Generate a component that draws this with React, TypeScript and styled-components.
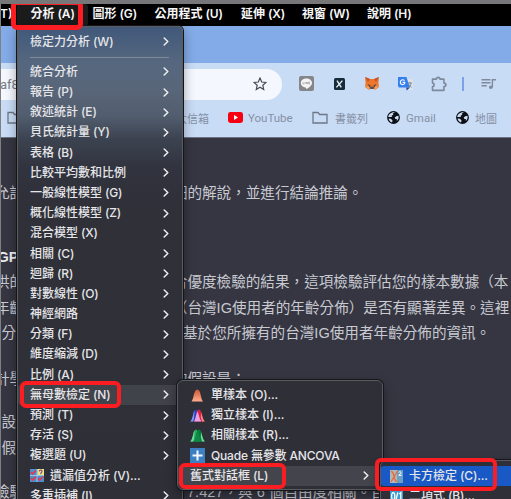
import React from "react";
import styled, { createGlobalStyle, css } from "styled-components";

const GlobalStyle = createGlobalStyle`
  html, body, #root { margin: 0; padding: 0; width: 100%; height: 100%; }
  body { overflow: hidden; background: #353641; }
  * { box-sizing: border-box; }
  svg { display: block; flex: none; }
`;

const sans = `Inter, "Noto Sans CJK TC", sans-serif`;

const Screen = styled.div`
  position: relative;
  width: 511px;
  height: 499px;
  overflow: hidden;
  display: flex;
  flex-direction: column;
  border-top: 4px solid #777779;
  background: #353641;
  font-family: ${sans};
  white-space: nowrap;
`;

const MenuBar = styled.nav`
  flex: none;
  height: 22px;
  display: flex;
  background: #000;
  color: #f7f7f7;
  font-size: 12px;
  font-weight: 600;
  line-height: 20px;
`;

const BarItem = styled.div<{ $w: number; $open?: boolean }>`
  flex: none;
  width: ${(p) => p.$w}px;
  height: 22px;
  padding-left: ${(p) => (p.$w < 20 ? 0 : 14)}px;
  margin-right: ${(p) => (p.$open ? -9 : 0)}px;
  border-radius: 3px;
  background: ${(p) => (p.$open ? "#1b1b1c" : "transparent")};
`;

const Key = styled.span`
  font-family: Inter, sans-serif;
  margin-left: 3px;
  letter-spacing: -0.15px;
`;

const TabStrip = styled.div`
  flex: none;
  height: 37px;
  background: #83abe7;
`;

const Browser = styled.header`
  flex: none;
  height: 75px;
  background: #c9dcf6;
  border-bottom: 1px solid #6c7382;
`;

const Toolbar = styled.div`
  height: 41px;
  display: flex;
  align-items: center;
`;

const Address = styled.div`
  flex: none;
  width: 282px;
  height: 31px;
  display: flex;
  align-items: center;
  justify-content: space-between;
  padding-right: 15px;
  margin-top: 1px;
  border-radius: 0 16px 16px 0;
  background: #f4f8fe;
  color: #777c84;
  font: 13px Roboto, sans-serif;
`;

const Slot = styled.div<{ $gap: number }>`
  flex: none;
  display: flex;
  align-items: center;
  margin-left: ${(p) => p.$gap}px;
`;

const Divider = styled.div`
  width: 2px;
  height: 14px;
  background: #78a3e6;
`;

const Bookmarks = styled.div`
  height: 27px;
  display: flex;
  align-items: center;
  color: #8490a4;
  font: 11px Roboto, "Noto Sans CJK TC", sans-serif;
`;

const BookmarkText = styled.span<{ $w: number; $spread?: number; $size?: number }>`
  flex: none;
  width: ${(p) => p.$w}px;
  font-size: ${(p) => p.$size ?? 11}px;
  letter-spacing: ${(p) => p.$spread ?? 0}px;
`;

const Article = styled.main`
  flex: 1;
  padding-top: 43px;
  color: #c8c9d1;
  font-family: "Liberation Sans", "Noto Sans CJK TC", sans-serif;
  font-size: 14.6px;
`;

const Line = styled.div<{ $gap?: number; $strong?: boolean }>`
  display: flex;
  height: 25.5px;
  line-height: 25.5px;
  margin-top: ${(p) => p.$gap ?? 0}px;
  ${(p) =>
    p.$strong &&
    css`
      font-weight: 700;
      color: #ededf0;
    `}
`;

const Lead = styled.span<{ $shift: number; $until: number }>`
  flex: none;
  width: ${(p) => p.$until - p.$shift}px;
  margin-left: ${(p) => p.$shift}px;
`;

const Panel = styled.div`
  position: absolute;
  color: #e6e6e9;
  font-size: 12px;
  font-weight: 500;
  background: #2e2f37;
  border: 1px solid #5a5b61;
  box-shadow: 0 0 0 1px #15161a, 0 4px 12px rgba(0, 0, 0, 0.4);
`;

const AnalyzeMenu = styled(Panel)`
  left: 17px;
  top: 22px;
  width: 166px;
  height: 500px;
  padding-top: 4.6px;
  border-radius: 0 5px 0 0;
  background: linear-gradient(180deg, #40587a 0, #55677f 34px, #596679 62px, #525e6f 88px, #3c4350 112px, #31333e 142px, #2f3038 180px, #2e2f37 100%);
`;

const MethodsMenu = styled(Panel)`
  left: 177px;
  top: 376px;
  width: 206px;
  height: 110px;
  padding-top: 4px;
  border-radius: 6px;
`;

const LegacyMenu = styled(Panel)`
  left: 380px;
  top: 456px;
  width: 150px;
  height: 60px;
  padding-top: 5px;
  border-radius: 6px;
`;

const Row = styled.div<{ $tone?: string; $left?: number; $tight?: boolean }>`
  display: flex;
  align-items: center;
  height: 20.2px;
  padding-left: ${(p) => p.$left ?? 12}px;
  padding-right: 13px;
  background: ${(p) => p.$tone ?? "transparent"};
  border-radius: 3px;
  line-height: 20px;
  letter-spacing: ${(p) => (p.$tight ? "-0.17px" : "normal")};

  > svg:last-child { margin-left: auto; }
`;

const RowIcon = styled.span`
  flex: none;
  margin-right: 6px;
`;

const Rule = styled.div`
  height: 1px;
  margin: 4.8px 13px 4.2px 12px;
  background: #7f8997;
`;

const Highlight = styled.div<{ $x: number; $y: number; $w: number; $h: number; $stroke?: number }>`
  position: absolute;
  left: ${(p) => p.$x}px;
  top: ${(p) => p.$y - 4}px;
  width: ${(p) => p.$w}px;
  height: ${(p) => p.$h}px;
  border: ${(p) => p.$stroke ?? 4}px solid #fc1d22;
  border-radius: 6px;
`;

const Edge = styled.div`
  position: absolute;
  left: 0;
  top: 0;
  width: 1px;
  height: 495px;
  background: #808083;
`;

const Chevron = () => (
  <svg width="6" height="9" viewBox="0 0 6 9" fill="none" stroke="#eeeeef" strokeWidth="1.5" strokeLinecap="round" strokeLinejoin="round">
    <path d="M1.2 1 4.8 4.5 1.2 8" />
  </svg>
);

const Folder = () => (
  <svg width="16" height="13" viewBox="0 0 16 13" fill="none" stroke="#6d7786" strokeWidth="1.3">
    <path d="M1 1.5h5l1.6 2H15V12H1z" />
  </svg>
);

const Star = () => (
  <svg width="14" height="14" viewBox="0 0 14 14" fill="none" stroke="#484c53" strokeWidth="1.2" strokeLinejoin="miter">
    <path d="m7 1 1.7 4 4.3.4-3.2 2.8.9 4.3L7 10.3l-3.7 2.2.9-4.3L1 5.4 5.3 5z" />
  </svg>
);

const LineLogo = () => (
  <svg width="15" height="15" viewBox="0 0 15 15">
    <rect width="15" height="15" rx="2" fill="#85868a" />
    <path d="M7.4 2.4c3.2 0 5.6 2 5.6 4.5 0 2.7-3.7 5-5.8 6.3.2-1 .1-1.6-.8-1.8-2.7-.5-4.6-2.3-4.6-4.5 0-2.5 2.4-4.5 5.6-4.5z" fill="#f4f4f5" />
    <path d="M4 6v2h1.2M6 6v2M7.2 8V6l1.4 2V6M11 6H9.8v2H11M9.8 7H11" fill="none" stroke="#85868a" strokeWidth=".5" />
  </svg>
);

const XLogo = () => (
  <svg width="11" height="12" viewBox="0 0 11 12">
    <rect width="11" height="12" rx="1.5" fill="#172b3b" />
    <path d="m3 2.6 4.3 6.8M8.4 2.6l-6 6.8" stroke="#e8f1f5" strokeWidth="1.4" />
  </svg>
);

const Fox = () => (
  <svg width="16" height="15" viewBox="0 0 16 15">
    <path d="m1 1 5 2h4l5-2-.6 6.2.7 3.7-4 2.8-1.3-.8H6.2l-1.3.8-4-2.8.7-3.7z" fill="#ed762e" />
    <path d="m1 1 5 2-2 3zM15 1l-5 2 2 3z" fill="#c45527" />
    <path d="m4 8 3 2-2 1zM12 8l-3 2 2 1z" fill="#503c3a" />
    <path d="m6 11 2-.6 2 .6-.4 2H6.4z" fill="#52525b" />
    <path d="m1 10 4 .5v3zM15 10l-4 .5v3z" fill="#e9a66f" />
  </svg>
);

const Translate = () => (
  <svg width="15" height="15" viewBox="0 0 15 15">
    <path d="M6 3h8.5v11H9z" fill="#e0e2e6" />
    <path d="M0 1h8.4L12 11.5H1L0 10z" fill="#347ff0" />
    <path d="m8 11.5 4 0-3.2 3z" fill="#274eaa" />
    <path d="M6.5 4.6a2.4 2.4 0 1 0 .2 2.9V6.4H4.6" fill="none" stroke="#fff" strokeWidth="1.1" />
    <path d="M9.8 7h4M12 6v1m1 0c-.2 2-1.2 3.1-2.3 4M11 8.5l2.5 3" fill="none" stroke="#76818d" strokeWidth=".9" />
  </svg>
);

const Puzzle = () => (
  <svg width="16" height="16" viewBox="0 0 16 16" fill="none" stroke="#7e899c" strokeWidth="1.6" strokeLinejoin="round">
    <path d="M1.5 3.1h4c0-2.3 3.4-2.3 3.4 0h4v4c2.7 0 2.7 3.5 0 3.5v3.8H1.5v-3.8c2.2 0 2.2-3.5 0-3.5z" />
  </svg>
);

const Queue = () => (
  <svg width="15" height="12" viewBox="0 0 15 12" fill="none" stroke="#7e899c" strokeWidth="1.4">
    <path d="M.5 1.7h9M.5 4.7h9M.5 7.7h5.2M11.4 9.1V1.7H15" />
    <circle cx="9.8" cy="9.3" r="1.8" fill="#7e899c" stroke="none" />
  </svg>
);

const YouTube = () => (
  <svg width="15" height="11" viewBox="0 0 15 11">
    <rect width="15" height="11" rx="2.4" fill="#f80012" />
    <path d="m6 3 4 2.5L6 8z" fill="#fff" />
  </svg>
);

const Globe = () => (
  <svg width="13" height="13" viewBox="0 0 13 13">
    <circle cx="6.5" cy="6.5" r="6.4" fill="#0c0f13" />
    <path d="M7.8 1.4 5.7 2.6l.7 1.2-1.9 1 .5 1.3H1.3C1.4 3.6 4 1 7.8 1.4zM1.6 7.6l2.2.2 1.7 1.4-.4 2.4C3.2 11 2 9.6 1.6 7.6zM11.4 4.8l-2.2.4-1.5 1.3.7 1.6h1.4v1.8c1.6-1.2 2.3-3.2 1.6-5.1z" fill="#c9dcf6" />
  </svg>
);

const Bell = ({ kind }: { kind: "single" | "pair" | "linked" }) => {
  const fill = kind === "single" ? "url(#bellOrange)" : kind === "pair" ? "#263fc0" : "#29a85d";
  return (
    <svg width="15" height="13" viewBox="0 0 15 13">
      <defs>
        <linearGradient id="bellOrange" x2="0" y2="1">
          <stop stopColor="#ce5735" />
          <stop offset="1" stopColor="#ffad8c" />
        </linearGradient>
      </defs>
      {kind === "single" ? (
        <path d="M1.5 12.6C4 10 3.6.5 7.3.5s3.2 9.4 5.7 12.1z" fill={fill} />
      ) : (
        <>
          <path d="M.2 12.6C3.3 9.8 3 .5 6 .5c3 .2 3 8.6 5.4 12.1z" fill={fill} />
          <path d="M4 12.6C6.4 9.8 6 .5 9 .5c3.1.2 3 9.2 5.8 12.1z" fill={kind === "pair" ? "#dc1f3d" : "#057e3c"} />
          <path d="M4 12.6C5.7 10 6 5 7.4 2.2c1.7 3.2 1.7 7.5 4 10.4z" fill={kind === "pair" ? "#e7a1df" : "#138747"} />
          <path d="M.2 12.6C3.3 9.8 3 3 4.6 1.4L4 9.5 3 12.6z" fill={kind === "pair" ? "#899aed" : "#72dda0"} />
          <path d="M14.8 12.6C12.6 10 12 6 11.2 3l-.4 5 1.2 4.6z" fill={kind === "pair" ? "#f58a94" : "#72dda0"} />
        </>
      )}
    </svg>
  );
};

const Plus = () => (
  <svg width="15" height="15" viewBox="0 0 15 15">
    <rect width="15" height="15" fill="#3c80c3" />
    <path d="M7.5 2.5v10M2.5 7.5h10" stroke="#f3f9ff" strokeWidth="2" />
  </svg>
);

const MissingValues = () => (
  <svg width="14" height="13" viewBox="0 0 14 13">
    <rect width="14" height="13" fill="#4c8fd0" />
    <path d="M0 6.5h14M7 0v13" stroke="#b6daf0" strokeWidth=".7" />
    <rect x="7.5" width="6.5" height="6" fill="#f2e57b" />
    <path d="m1 3 1.5 2L6 1.5M1 9l1.8 2L6 7.8M8 9l1.8 2L13 7.5" fill="none" stroke="#e83547" strokeWidth="1.6" />
    <path d="M9.3 2.5c0-2 3-1.7 2.7 0-.1 1-1.2 1-1.2 2v.7" fill="none" stroke="#7b419a" strokeWidth="1.1" />
  </svg>
);

const ChiSquare = () => (
  <svg width="13" height="13" viewBox="0 0 13 13">
    <rect width="13" height="13" fill="#6b9fc3" />
    <path d="M0 0h7v13H0z" fill="#b3b7b8" />
    <path d="M1 1.5c2-.3 2 1.3 3 5s1.3 5.2 3.5 4.8M7.5 1 1 12" fill="none" stroke="#e66a3d" strokeWidth="1.3" />
    <path d="M8.7 2.4c1-1.3 3-.4 2.2.9L8.7 5.3h3" fill="none" stroke="#fff" />
  </svg>
);

const Binomial = () => (
  <svg width="13" height="13" viewBox="0 0 13 13">
    <rect width="13" height="13" fill="#3a9bcf" />
    <ellipse cx="3.2" cy="6.2" rx="1.6" ry="3.6" fill="none" stroke="#fff" strokeWidth="1.3" />
    <path d="m5.8 10.5 2-8M9.3 4l1.5-1.3v8" fill="none" stroke="#fff" strokeWidth="1.3" />
  </svg>
);

const barItems: [string, string, number, boolean?][] = [
  ["分析", "(A)", 71, true],
  ["圖形", "(G)", 62],
  ["公用程式", "(U)", 86.5],
  ["延伸", "(X)", 61],
  ["視窗", "(W)", 65],
  ["說明", "(H)", 80],
];

const analyses: [string, string?][] = [
  ["統合分析"],
  ["報告", "(P)"],
  ["敘述統計", "(E)"],
  ["貝氏統計量", "(Y)"],
  ["表格", "(B)"],
  ["比較平均數和比例"],
  ["一般線性模型", "(G)"],
  ["概化線性模型", "(Z)"],
  ["混合模型", "(X)"],
  ["相關", "(C)"],
  ["迴歸", "(R)"],
  ["對數線性", "(O)"],
  ["神經網路"],
  ["分類", "(F)"],
  ["維度縮減", "(D)"],
  ["比例", "(A)"],
  ["無母數檢定", "(N)"],
  ["預測", "(T)"],
  ["存活", "(S)"],
  ["複選題", "(U)"],
  ["遺漏值分析", "(V)..."],
  ["多重插補", "(I)"],
];

const paragraphs: { lead: string; shift: number; until: number; rest?: string; gap?: number; strong?: boolean }[] = [
  { lead: "允許", shift: -5, until: 172.8, rest: "細的解說，並進行結論推論。" },
  { lead: "GPT", shift: -2.5, until: 172.8, gap: 38, strong: true },
  { lead: "供的", shift: -5, until: 172.8, rest: "合優度檢驗的結果，這項檢驗評估您的樣本數據（本" },
  { lead: "年齡", shift: -5, until: 172.8, rest: "（台灣IG使用者的年齡分佈）是否有顯著差異。這裡" },
  { lead: "分佈", shift: 1.5, until: 183, rest: "基於您所擁有的台灣IG使用者年齡分佈的資訊。" },
  { lead: "計學", shift: -5, until: 172.8, rest: "的假設是：", gap: 20 },
  { lead: "設", shift: 1.5, until: 172.8, gap: 18 },
  { lead: "假", shift: 1.5, until: 172.8 },
  { lead: "檢驗", shift: -5, until: 187, rest: "7.427，與 6 個自由度相關。自", gap: 19 },
];

export default function App() {
  return (
    <>
      <GlobalStyle />
      <Screen>
        <MenuBar>
          <BarItem $w={16.5}>T)</BarItem>
          {barItems.map(([name, key, w, open]) => (
            <BarItem key={name} $w={w} $open={open}>
              {name}
              <Key>{key}</Key>
            </BarItem>
          ))}
        </MenuBar>
        <TabStrip />
        <Browser>
          <Toolbar>
            <Address><span>af8</span><Star /></Address>
            <Slot $gap={17}><LineLogo /></Slot>
            <Slot $gap={20}><XLogo /></Slot>
            <Slot $gap={19}><Fox /></Slot>
            <Slot $gap={18}><Translate /></Slot>
            <Slot $gap={18}><Puzzle /></Slot>
            <Slot $gap={15}><Divider /></Slot>
            <Slot $gap={17}><Queue /></Slot>
          </Toolbar>
          <Bookmarks>
            <Slot $gap={7}><Folder /></Slot>
            <Slot $gap={153}><BookmarkText $w={52}>大信箱</BookmarkText></Slot>
            <Slot $gap={0}><YouTube /></Slot>
            <Slot $gap={5}><BookmarkText $w={64} $size={11.5}>YouTube</BookmarkText></Slot>
            <Slot $gap={0}><Folder /></Slot>
            <Slot $gap={7}><BookmarkText $w={52}>書籤列</BookmarkText></Slot>
            <Slot $gap={0}><Globe /></Slot>
            <Slot $gap={6}><BookmarkText $w={50} $size={11.5}>Gmail</BookmarkText></Slot>
            <Slot $gap={0}><Globe /></Slot>
            <Slot $gap={6}><BookmarkText $w={30}>地圖</BookmarkText></Slot>
          </Bookmarks>
        </Browser>
        <Article>
          {paragraphs.map((p) => (
            <Line key={p.lead} $gap={p.gap} $strong={p.strong}>
              <Lead $shift={p.shift} $until={p.until}>{p.lead}</Lead>
              <span>{p.rest}</span>
            </Line>
          ))}
        </Article>

        <AnalyzeMenu>
          <Row>檢定力分析<Key>(W)</Key><Chevron /></Row>
          <Rule />
          {analyses.map(([name, key]) => (
            <Row key={name} $tone={name === "無母數檢定" ? "#41434b" : undefined}>
              {name === "遺漏值分析" && <RowIcon><MissingValues /></RowIcon>}
              {name}
              {key && <Key>{key}</Key>}
              {name !== "遺漏值分析" && <Chevron />}
            </Row>
          ))}
        </AnalyzeMenu>

        <MethodsMenu>
          <Row><RowIcon><Bell kind="single" /></RowIcon>單樣本<Key>(O)...</Key></Row>
          <Row><RowIcon><Bell kind="pair" /></RowIcon>獨立樣本<Key>(I)...</Key></Row>
          <Row><RowIcon><Bell kind="linked" /></RowIcon>相關樣本<Key>(R)...</Key></Row>
          <Row $tight><RowIcon><Plus /></RowIcon>Quade 無參數 ANCOVA</Row>
          <Row $tone="#44454c">舊式對話框<Key>(L)</Key><Chevron /></Row>
        </MethodsMenu>

        <LegacyMenu>
          <Row $tone="#1859c5" $left={9}><RowIcon><ChiSquare /></RowIcon>卡方檢定<Key>(C)...</Key></Row>
          <Row $left={9}><RowIcon><Binomial /></RowIcon>二項式<Key>(B)...</Key></Row>
        </LegacyMenu>

        <Edge />
        <Highlight $x={11} $y={0} $w={72} $h={30} $stroke={5} />
        <Highlight $x={20} $y={381} $w={101} $h={27} />
        <Highlight $x={179} $y={463} $w={107} $h={26} />
        <Highlight $x={375} $y={458} $w={122} $h={33} />
      </Screen>
    </>
  );
}
